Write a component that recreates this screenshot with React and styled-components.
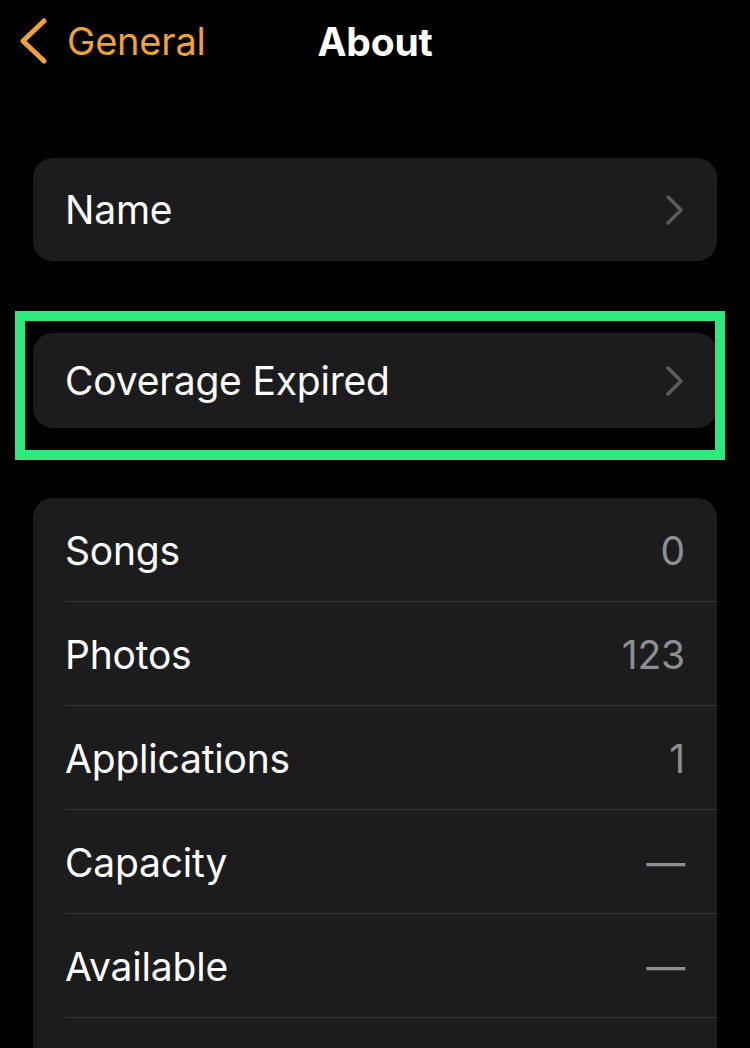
import React from 'react';
import styled, { createGlobalStyle } from 'styled-components';

const GlobalStyle = createGlobalStyle`
  html, body {
    margin: 0;
    padding: 0;
    background: #000;
  }
  body {
    font-family: Inter, "Noto Sans", "Liberation Sans", sans-serif;
    color: #fff;
    -webkit-font-smoothing: antialiased;
  }
`;

const Screen = styled.div`
  width: 750px;
  height: 1048px;
  overflow: hidden;
  background: #000;
  padding: 0 33px;
  box-sizing: border-box;
`;

const NavBar = styled.div`
  display: grid;
  grid-template-columns: 1fr auto 1fr;
  align-items: center;
  height: 82px;
  margin: 0 -33px;
  padding: 0 18px;
`;

const BackButton = styled.div`
  display: flex;
  align-items: center;
  gap: 19px;
  color: #f0a03c;
  font-size: 38px;
  letter-spacing: -0.2px;
`;

const Title = styled.div`
  font-size: 39px;
  font-weight: 700;
  letter-spacing: -0.2px;
`;

const Group = styled.div`
  position: relative;
  background: #1c1c1e;
  border-radius: 20px;
  margin-top: ${(p) => p.$top}px;
  overflow: hidden;
`;

const Highlight = styled.div`
  position: absolute;
  top: -22px;
  left: -18px;
  right: -8px;
  bottom: -32px;
  border: 10px solid #2fe97c;
  pointer-events: none;
`;

const Section = styled.div`
  position: relative;
  margin-top: ${(p) => p.$top}px;
`;

const Row = styled.div`
  display: flex;
  align-items: center;
  justify-content: space-between;
  height: ${(p) => p.$h}px;
  padding: 0 32px;
  position: relative;

  & + &::before {
    content: '';
    position: absolute;
    top: -1px;
    left: 32px;
    right: 0;
    height: 1px;
    background: #38383a;
  }
`;

const Label = styled.span`
  font-size: 39px;
  letter-spacing: -0.2px;
  color: #fff;
`;

const Value = styled.span`
  font-size: 39px;
  letter-spacing: -0.2px;
  color: #8e8e93;
`;

const Chevron = () => (
  <svg width="20" height="30" viewBox="0 0 20 30" fill="none">
    <path d="M3 2 L16 15 L3 28" stroke="#5b5b5f" strokeWidth="3.5" strokeLinecap="round" strokeLinejoin="round" />
  </svg>
);

const BackChevron = () => (
  <svg width="30" height="46" viewBox="0 0 30 46" fill="none">
    <path d="M26 3 L5 23 L26 43" stroke="#f0a03c" strokeWidth="5" strokeLinecap="round" strokeLinejoin="round" />
  </svg>
);

const stats = [
  ['Songs', '0'],
  ['Photos', '123'],
  ['Applications', '1'],
  ['Capacity', '—'],
  ['Available', '—'],
];

const App = () => {
  return (
    <>
      <GlobalStyle />
      <Screen>
        <NavBar>
          <BackButton>
            <BackChevron />
            General
          </BackButton>
          <Title>About</Title>
          <div />
        </NavBar>

        <Group $top={76}>
          <Row $h={103}>
            <Label>Name</Label>
            <Chevron />
          </Row>
        </Group>

        <Section $top={72}>
          <Group $top={0}>
            <Row $h={95}>
              <Label>Coverage Expired</Label>
              <Chevron />
            </Row>
          </Group>
          <Highlight />
        </Section>

        <Group $top={70}>
          {stats.map(([label, value]) => (
            <Row key={label} $h={104}>
              <Label>{label}</Label>
              <Value>{value}</Value>
            </Row>
          ))}
          <Row $h={104} />
        </Group>
      </Screen>
    </>
  );
};

export default App;
